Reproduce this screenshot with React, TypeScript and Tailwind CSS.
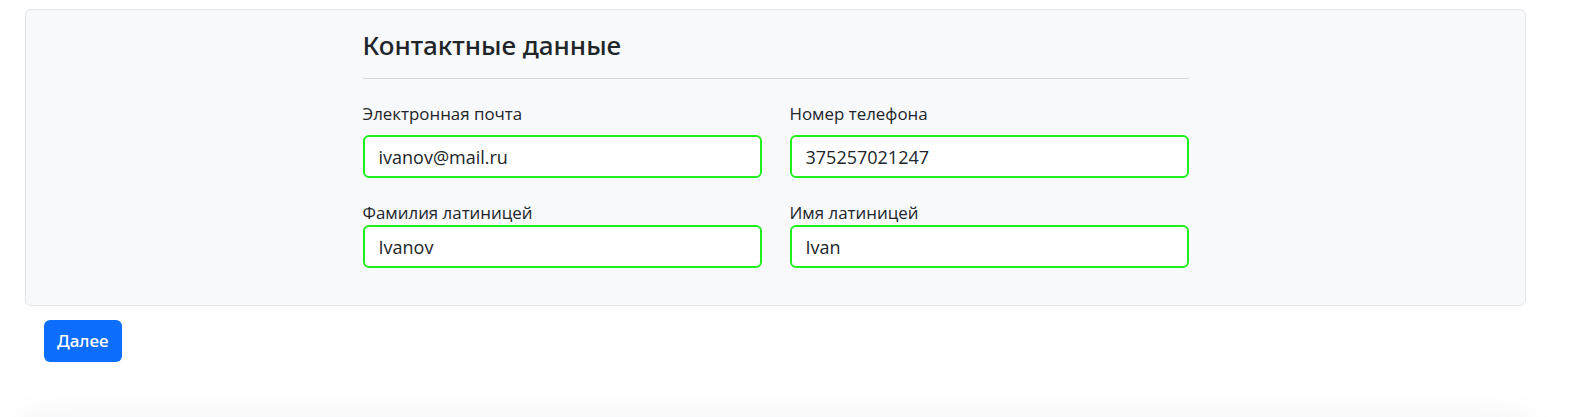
export default function App() {
  const fields = [
    { label: 'Электронная почта', value: 'ivanov@mail.ru', gap: 'mb-[9px]' },
    { label: 'Номер телефона', value: '375257021247', gap: 'mb-[9px]' },
    { label: 'Фамилия латиницей', value: 'Ivanov', gap: 'mb-0' },
    { label: 'Имя латиницей', value: 'Ivan', gap: 'mb-0' },
  ]

  return (
    <div className="h-[417px] overflow-hidden bg-white text-[#212529] font-['Open_Sans',sans-serif]">
      <div className="pl-[25px] pt-[9px]">
        {/* Contact card */}
        <div className="w-[1501px] h-[297px] bg-[#f8f9fa] border border-[#e3e5e8] rounded-[6px] pt-[18px]">
          <div className="w-[826px] mx-auto">
            <h3 className="text-[26px] leading-[34px] font-medium font-['Noto_Sans',sans-serif]">Контактные данные</h3>
            <div className="mt-[16px] border-t border-[#d8d9da]" />

            <div className="grid grid-cols-2 gap-x-[28px] gap-y-[23px] mt-[23px]">
              {fields.map(({ label, value, gap }) => (
                <div key={label}>
                  <label className={`block text-[16.9px] leading-[24px] ${gap}`}>{label}</label>
                  <input
                    readOnly
                    value={value}
                    className="block w-full h-[43px] px-[14px] text-[18px] text-[#212529] bg-white border-2 border-[#1ef01e] rounded-[6px] outline-none"
                  />
                </div>
              ))}
            </div>
          </div>
        </div>

        <button className="ml-[19px] mt-[14px] h-[42px] px-[13px] bg-[#0d6efd] text-white text-[17px] font-medium font-['Noto_Sans',sans-serif] rounded-[6px]">
          Далее
        </button>

        {/* next block, only its shadow is visible */}
        <div className="mt-[60px] w-[1501px] h-[200px] bg-white rounded-[10px] shadow-[0_0_40px_rgba(30,40,80,0.08)]" />
      </div>
    </div>
  )
}
